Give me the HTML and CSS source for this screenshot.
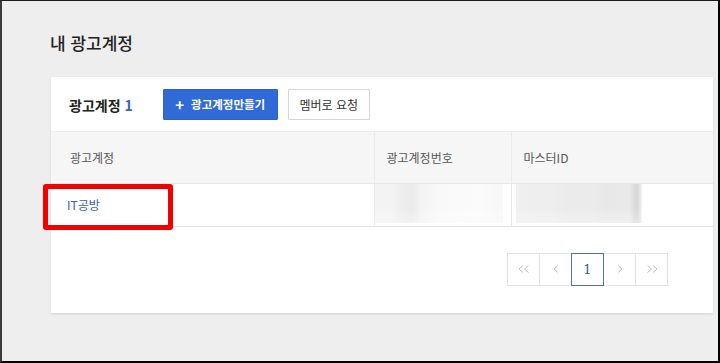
FILE: index.html
```html
<!DOCTYPE html>
<html lang="ko">
<head>
<meta charset="utf-8">
<title>내 광고계정</title>
<link rel="stylesheet" href="styles.css">
</head>
<body>
<div class="frame">
  <h1 class="page-title">내 광고계정</h1>
  <section class="card">
    <div class="card-head">
      <h2 class="card-title">광고계정 <span class="count">1</span></h2>
      <div class="actions">
        <button class="btn btn-primary"><span class="plus">+</span>광고계정만들기</button>
        <button class="btn btn-outline">멤버로 요청</button>
      </div>
    </div>
    <table class="accounts">
      <thead>
        <tr>
          <th class="col-name">광고계정</th>
          <th class="col-num">광고계정번호</th>
          <th class="col-master">마스터ID</th>
        </tr>
      </thead>
      <tbody>
        <tr>
          <td class="col-name"><a class="acc-link">IT공방</a></td>
          <td class="col-num blur-cell"><div class="blur blur-num"></div></td>
          <td class="col-master blur-cell"><div class="blur blur-master"></div></td>
        </tr>
      </tbody>
    </table>
    <nav class="pager">
      <span class="pg">
        <svg width="12" height="8" viewBox="0 0 12 8"><polyline points="5,0.5 1,4 5,7.5" fill="none" stroke="#bdbdbd" stroke-width="1"/><polyline points="10.5,0.5 6.5,4 10.5,7.5" fill="none" stroke="#bdbdbd" stroke-width="1"/></svg>
      </span>
      <span class="pg">
        <svg width="6" height="8" viewBox="0 0 6 8"><polyline points="5,0.5 1,4 5,7.5" fill="none" stroke="#bdbdbd" stroke-width="1"/></svg>
      </span>
      <span class="pg pg-active">1</span>
      <span class="pg">
        <svg width="6" height="8" viewBox="0 0 6 8"><polyline points="1,0.5 5,4 1,7.5" fill="none" stroke="#bdbdbd" stroke-width="1"/></svg>
      </span>
      <span class="pg">
        <svg width="12" height="8" viewBox="0 0 12 8"><polyline points="1.5,0.5 5.5,4 1.5,7.5" fill="none" stroke="#bdbdbd" stroke-width="1"/><polyline points="7,0.5 11,4 7,7.5" fill="none" stroke="#bdbdbd" stroke-width="1"/></svg>
      </span>
    </nav>
  </section>
  <div class="highlight"></div>
</div>
</body>
</html>
```

FILE: styles.css
```css
* { box-sizing: border-box; }
html, body { margin: 0; padding: 0; background: #ffffff; }
body {
  font-family: "Noto Sans CJK KR", "Noto Sans", sans-serif;
  color: #222;
}
.frame {
  position: relative;
  width: 720px;
  height: 363px;
  border-top: 1px solid #1a1a1a;
  border-left: 2px solid #3a3a3a;
  border-right: 2px solid #000;
  border-bottom: 2px solid #000;
  background: #eeeeee;
  padding: 30px 5px 0 47px;
  overflow: hidden;
}
.page-title {
  margin: 0 0 22px 1px;
  font-size: 17px;
  line-height: 24px;
  font-weight: 500;
  color: #222;
}
.card {
  margin-left: 2px;
  background: #fff;
  box-shadow: 0 1px 2px rgba(0,0,0,0.12);
  padding-bottom: 27px;
}
.card-head {
  display: flex;
  align-items: center;
  height: 55px;
  padding: 1px 0 0 18px;
  border-bottom: 1px solid #ececec;
}
.card-title {
  margin: 0 30px 0 0;
  font-size: 14px;
  font-weight: 700;
  color: #222;
  line-height: 20px;
}
.count { color: #3a66b8; }
.actions { display: flex; gap: 10px; }
.btn {
  height: 31px;
  font-family: "Noto Sans CJK KR", sans-serif;
  font-size: 12px;
  line-height: 1;
  padding: 0;
  border-radius: 1px;
  display: flex;
  align-items: center;
  justify-content: center;
}
.btn-primary {
  width: 115px;
  background: #2f6ad6;
  border: 1px solid #2b64cf;
  color: #fff;
  font-weight: 700;
  font-size: 11.5px;
}
.plus { font-size: 15px; font-weight: 700; margin-right: 7px; }
.btn-outline {
  width: 82px;
  background: #fff;
  border: 1px solid #d6d6d6;
  color: #333;
  font-weight: 400;
}
.accounts {
  width: 100%;
  border-collapse: collapse;
  table-layout: fixed;
}
.accounts th {
  height: 51px;
  background: #f6f6f6;
  font-size: 12px;
  font-weight: 400;
  color: #555;
  text-align: left;
  border-bottom: 1px solid #e6e6e6;
  padding: 0 0 0 12px;
}
.accounts td {
  height: 43px;
  border-bottom: 1px solid #e6e6e6;
  padding: 0 0 0 12px;
  font-size: 12px;
}
.accounts .col-name { width: 323px; padding-left: 19px; }
.accounts td.col-name { padding-left: 16px; }
.accounts .col-num { width: 137px; border-left: 1px solid #ebebeb; }
.accounts .col-master { border-left: 1px solid #ebebeb; }
.acc-link { color: #3a62ad; text-decoration: none; }
.accounts td.blur-cell { padding: 0; vertical-align: top; }
.blur { height: 39px; }
.blur-num {
  width: 128px;
  background:
    linear-gradient(to bottom, rgba(255,255,255,0) 0%, rgba(255,255,255,0) 55%, rgba(255,255,255,0.35) 100%),
    linear-gradient(to right, #f3f3f3 0, #f3f3f3 18px, #eeeeee 24px, #eaeaea 38px, #f4f4f4 46px, #f8f8f8 62px, #fbfbfb 100px, #f7f7f7 128px);
}
.blur-master {
  margin-left: 4px;
  width: 126px;
  background:
    linear-gradient(to bottom, rgba(255,255,255,0) 0%, rgba(255,255,255,0) 60%, rgba(255,255,255,0.3) 100%),
    linear-gradient(to right, #efefef 0, #eeeeee 36px, #ebebeb 48px, #ebebeb 78px, #e8e8e8 88px, #e9e9e9 114px, #d9d9d9 119px, #dadada 122px, #f3f3f3 126px);
}
.pager {
  display: flex;
  justify-content: flex-end;
  margin: 26px 45px 0 0;
}
.pg {
  width: 33px;
  height: 33px;
  margin-left: -1px;
  border: 1px solid #e4e4e4;
  display: flex;
  align-items: center;
  justify-content: center;
  background: #fff;
}
.pg-active {
  position: relative;
  z-index: 1;
  border-color: #5a7192;
  color: #3c5a8c;
  font-family: "DejaVu Serif", "Liberation Serif", serif;
  font-size: 13px;
}
.highlight {
  position: absolute;
  left: 41px;
  top: 183px;
  width: 130px;
  height: 46px;
  border: 5px solid #f20000;
  border-radius: 3px;
}
```
